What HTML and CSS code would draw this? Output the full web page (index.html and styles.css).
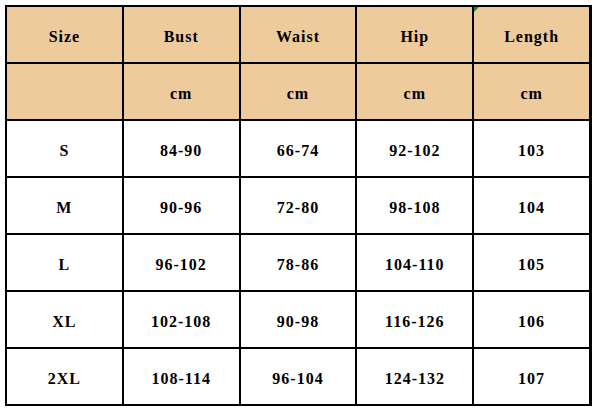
FILE: index.html
```html
<!DOCTYPE html>
<html>
<head>
<meta charset="utf-8">
<link rel="stylesheet" href="styles.css">
</head>
<body>
<div class="chart">
  <div class="cell head">Size</div>
  <div class="cell head">Bust</div>
  <div class="cell head">Waist</div>
  <div class="cell head">Hip</div>
  <div class="cell head marked">Length</div>

  <div class="cell head"></div>
  <div class="cell head">cm</div>
  <div class="cell head">cm</div>
  <div class="cell head">cm</div>
  <div class="cell head">cm</div>

  <div class="cell">S</div>
  <div class="cell">84-90</div>
  <div class="cell">66-74</div>
  <div class="cell">92-102</div>
  <div class="cell">103</div>

  <div class="cell">M</div>
  <div class="cell">90-96</div>
  <div class="cell">72-80</div>
  <div class="cell">98-108</div>
  <div class="cell">104</div>

  <div class="cell">L</div>
  <div class="cell">96-102</div>
  <div class="cell">78-86</div>
  <div class="cell">104-110</div>
  <div class="cell">105</div>

  <div class="cell">XL</div>
  <div class="cell">102-108</div>
  <div class="cell">90-98</div>
  <div class="cell">116-126</div>
  <div class="cell">106</div>

  <div class="cell">2XL</div>
  <div class="cell">108-114</div>
  <div class="cell">96-104</div>
  <div class="cell">124-132</div>
  <div class="cell">107</div>
</div>
</body>
</html>
```
FILE: styles.css
```css
html, body {
  margin: 0;
  padding: 0;
  background: #ffffff;
}

.chart {
  box-sizing: border-box;
  margin: 5px 0 0 5px;
  width: 587px;
  display: grid;
  grid-template-columns: repeat(5, 1fr);
  grid-auto-rows: 55px;
  gap: 2px;
  background: #000000;
  border-style: solid;
  border-color: #000000;
  border-width: 2px 3px 2px 2px;
  font-family: "Liberation Serif", "DejaVu Serif", serif;
  font-weight: bold;
  font-size: 16px;
  letter-spacing: 1px;
  color: #000000;
}

.cell {
  background: #ffffff;
  display: flex;
  align-items: center;
  justify-content: center;
  padding-top: 5px;
  box-sizing: border-box;
}

.head {
  background: #edcb9d;
}

.marked {
  position: relative;
}

.marked::before {
  content: "";
  position: absolute;
  left: 0;
  top: 0;
  width: 0;
  height: 0;
  border-top: 5px solid #1f8a1f;
  border-right: 5px solid transparent;
}
```
